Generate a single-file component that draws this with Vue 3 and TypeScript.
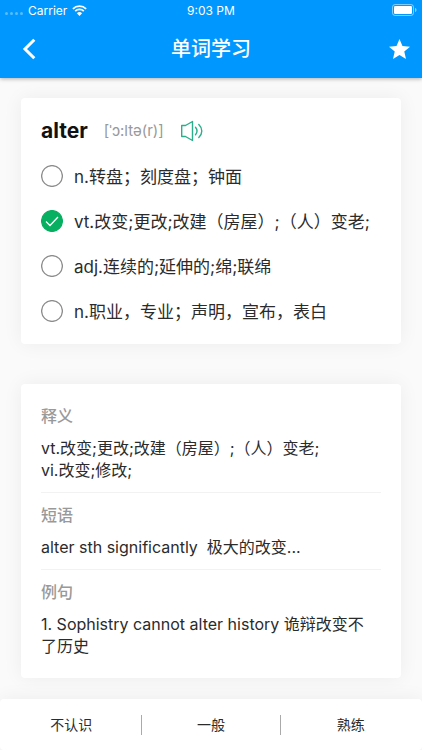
<script setup lang="ts">
import { ref } from 'vue'

interface Section {
  title: string
  lines: string[]
}

const options: string[] = [
  'n.转盘；刻度盘；钟面',
  'vt.改变;更改;改建（房屋）;（人）变老;',
  'adj.连续的;延伸的;绵;联绵',
  'n.职业，专业；声明，宣布，表白',
]
const selected = ref<number>(1)

const sections: Section[] = [
  { title: '释义', lines: ['vt.改变;更改;改建（房屋）;（人）变老;', 'vi.改变;修改;'] },
  { title: '短语', lines: ['alter sth significantly  极大的改变...'] },
  { title: '例句', lines: ['1. Sophistry cannot alter history 诡辩改变不了历史'] },
]

const levels: string[] = ['不认识', '一般', '熟练']
</script>

<template>
  <div class="page">
    <header class="top">
      <div class="status">
        <div class="carrier">
          <span class="dots"><i></i><i></i><i></i><i></i></span>
          <span>Carrier</span>
          <svg class="wifi" viewBox="0 0 15 11" aria-hidden="true">
            <path d="M.9 3.8a9.6 9.6 0 0 1 13.2 0M3.2 6.2a6.2 6.2 0 0 1 8.6 0" fill="none" stroke="#fff" stroke-width="1.8" />
            <path d="M7.5 11 4.9 8.2a3.8 3.8 0 0 1 5.2 0z" fill="#fff" />
          </svg>
        </div>
        <span>9:03 PM</span>
        <div class="power">
          <svg class="battery" viewBox="0 0 25 12" aria-hidden="true">
            <rect x=".5" y=".5" width="21" height="11" rx="2.6" fill="none" stroke="#fff" stroke-opacity=".5" />
            <rect x="2" y="2" width="18" height="8" rx="1.2" fill="#fff" />
            <path d="M23 4v4c1-.4 1.5-1.1 1.5-2S24 4.4 23 4z" fill="#fff" fill-opacity=".5" />
          </svg>
        </div>
      </div>
      <nav class="bar">
        <button class="icon-button" type="button" aria-label="返回">
          <svg class="back" viewBox="0 0 14 22" aria-hidden="true">
            <path d="M12.3 1.8 3 11l9.3 9.2" fill="none" stroke="#fff" stroke-width="3" />
          </svg>
        </button>
        <h1>单词学习</h1>
        <button class="icon-button end" type="button" aria-label="收藏">
          <svg class="star" viewBox="2 2 20 19" aria-hidden="true">
            <path d="M12 17.27 18.18 21l-1.64-7.03L22 9.24l-7.19-.61L12 2 9.19 8.63 2 9.24l5.46 4.73L5.82 21z" fill="#fff" />
          </svg>
        </button>
      </nav>
    </header>

    <main class="content">
      <section class="card">
        <div class="word">
          <h2>alter</h2>
          <span class="phonetic">[ˈɔ:ltə(r)]</span>
          <button class="sound" type="button" aria-label="发音">
            <svg viewBox="0 0 24 22" fill="none" stroke="#2bae8c" stroke-width="1.4" aria-hidden="true">
              <path d="M5.5 5.5H1.7v11h3.8l7 4V1.5z" stroke-linejoin="round" />
              <path d="M15.5 7.3c1.9 2.3 1.9 5.1 0 7.4M18.8 4.5c4 3.8 4 9.2 0 13" stroke-linecap="round" />
            </svg>
          </button>
        </div>
        <label v-for="(option, i) in options" :key="i" class="option">
          <input v-model="selected" type="radio" name="meaning" :value="i" />
          <svg class="mark" viewBox="0 0 22 22" aria-hidden="true">
            <circle cx="11" cy="11" r="10.4" />
            <path d="m5 11.5 4 4 8-8.5" />
          </svg>
          <span>{{ option }}</span>
        </label>
      </section>

      <section class="card">
        <div v-for="section in sections" :key="section.title" class="section">
          <h3>{{ section.title }}</h3>
          <p v-for="line in section.lines" :key="line">{{ line }}</p>
        </div>
      </section>
    </main>

    <footer class="levels">
      <button v-for="level in levels" :key="level" type="button">{{ level }}</button>
    </footer>
  </div>
</template>

<style>
body {
  background: #fafafa;
}
</style>

<style scoped>
.page {
  display: flex;
  flex-direction: column;
  min-height: 100vh;
  font-family: Inter, "Noto Sans CJK SC", sans-serif;
  color: #2b2b2b;
  text-spacing-trim: space-all;
}
button {
  border: 0;
  padding: 0;
  background: none;
  font: inherit;
  color: inherit;
  cursor: pointer;
}
svg {
  display: block;
}
h1, h2, h3, p {
  margin: 0;
}
.top {
  background: #0098ff;
  color: #fff;
  box-shadow: 0 1px 4px rgba(0, 0, 0, 0.3);
}
.status {
  display: grid;
  grid-template-columns: 1fr auto 1fr;
  align-items: center;
  height: 20px;
  padding: 0 5px;
  font-size: 12px;
}
.carrier {
  display: flex;
  align-items: center;
  gap: 5px;
}
.dots {
  display: flex;
  gap: 2px;
  padding-top: 7px;
}
.dots i {
  width: 3px;
  height: 3px;
  border-radius: 50%;
  background: rgba(255, 255, 255, 0.35);
}
.wifi {
  width: 15px;
  height: 11px;
}
.power {
  display: flex;
  justify-content: flex-end;
}
.battery {
  width: 25px;
  height: 12px;
}
.bar {
  display: grid;
  grid-template-columns: 1fr auto 1fr;
  align-items: center;
  height: 58px;
  padding: 0 12px;
}
.icon-button {
  justify-self: start;
  padding-left: 10px;
}
.icon-button.end {
  justify-self: end;
}
.back {
  width: 14px;
  height: 22px;
}
.star {
  width: 21px;
  height: 20px;
}
h1 {
  font-size: 20px;
  font-weight: 500;
  line-height: 28px;
}
.content {
  flex: 1;
  display: flex;
  flex-direction: column;
  gap: 40px;
  padding: 20px 21px 21px;
}
.card {
  padding: 10px 20px;
  border-radius: 4px;
  background: #fff;
  box-shadow: 0 0 20px rgba(0, 0, 0, 0.06);
}
.card:first-child {
  padding-bottom: 11px;
}
.word {
  display: flex;
  align-items: center;
  height: 45px;
}
h2 {
  font-size: 21px;
  font-weight: 700;
  color: #111;
}
.phonetic {
  margin-left: 16px;
  font-size: 15px;
  color: #999;
}
.sound {
  margin-left: 16px;
}
.sound svg {
  width: 24px;
  height: 22px;
}
.option {
  display: flex;
  align-items: center;
  gap: 11px;
  height: 45px;
  font-size: 17px;
  white-space: nowrap;
  cursor: pointer;
}
.option input {
  position: absolute;
  opacity: 0;
}
.mark {
  width: 22px;
  height: 22px;
  fill: none;
  stroke: #8c8c8c;
  stroke-width: 1.3;
}
.mark path {
  display: none;
  stroke: #fff;
}
input:checked + .mark circle {
  fill: #07af60;
  stroke: #07af60;
}
input:checked + .mark path {
  display: block;
}
.section {
  padding: 11px 0;
  border-bottom: 1px solid #f2f2f2;
}
.section:last-child {
  border-bottom: 0;
}
h3 {
  margin-bottom: 10px;
  font-size: 16px;
  font-weight: 500;
  line-height: 22px;
  color: #999;
}
p {
  padding-right: 8px;
  font-size: 16px;
  line-height: 22px;
  white-space: pre-wrap;
}
.levels {
  display: flex;
  align-items: center;
  height: 51px;
  padding: 0 2px;
  border-radius: 4px;
  background: #fff;
  box-shadow: 0 0 20px rgba(0, 0, 0, 0.06);
}
.levels button {
  flex: 1;
  height: 20px;
  font-size: 14px;
  line-height: 20px;
}
.levels button + button {
  border-left: 1px solid #aaa;
}
</style>
